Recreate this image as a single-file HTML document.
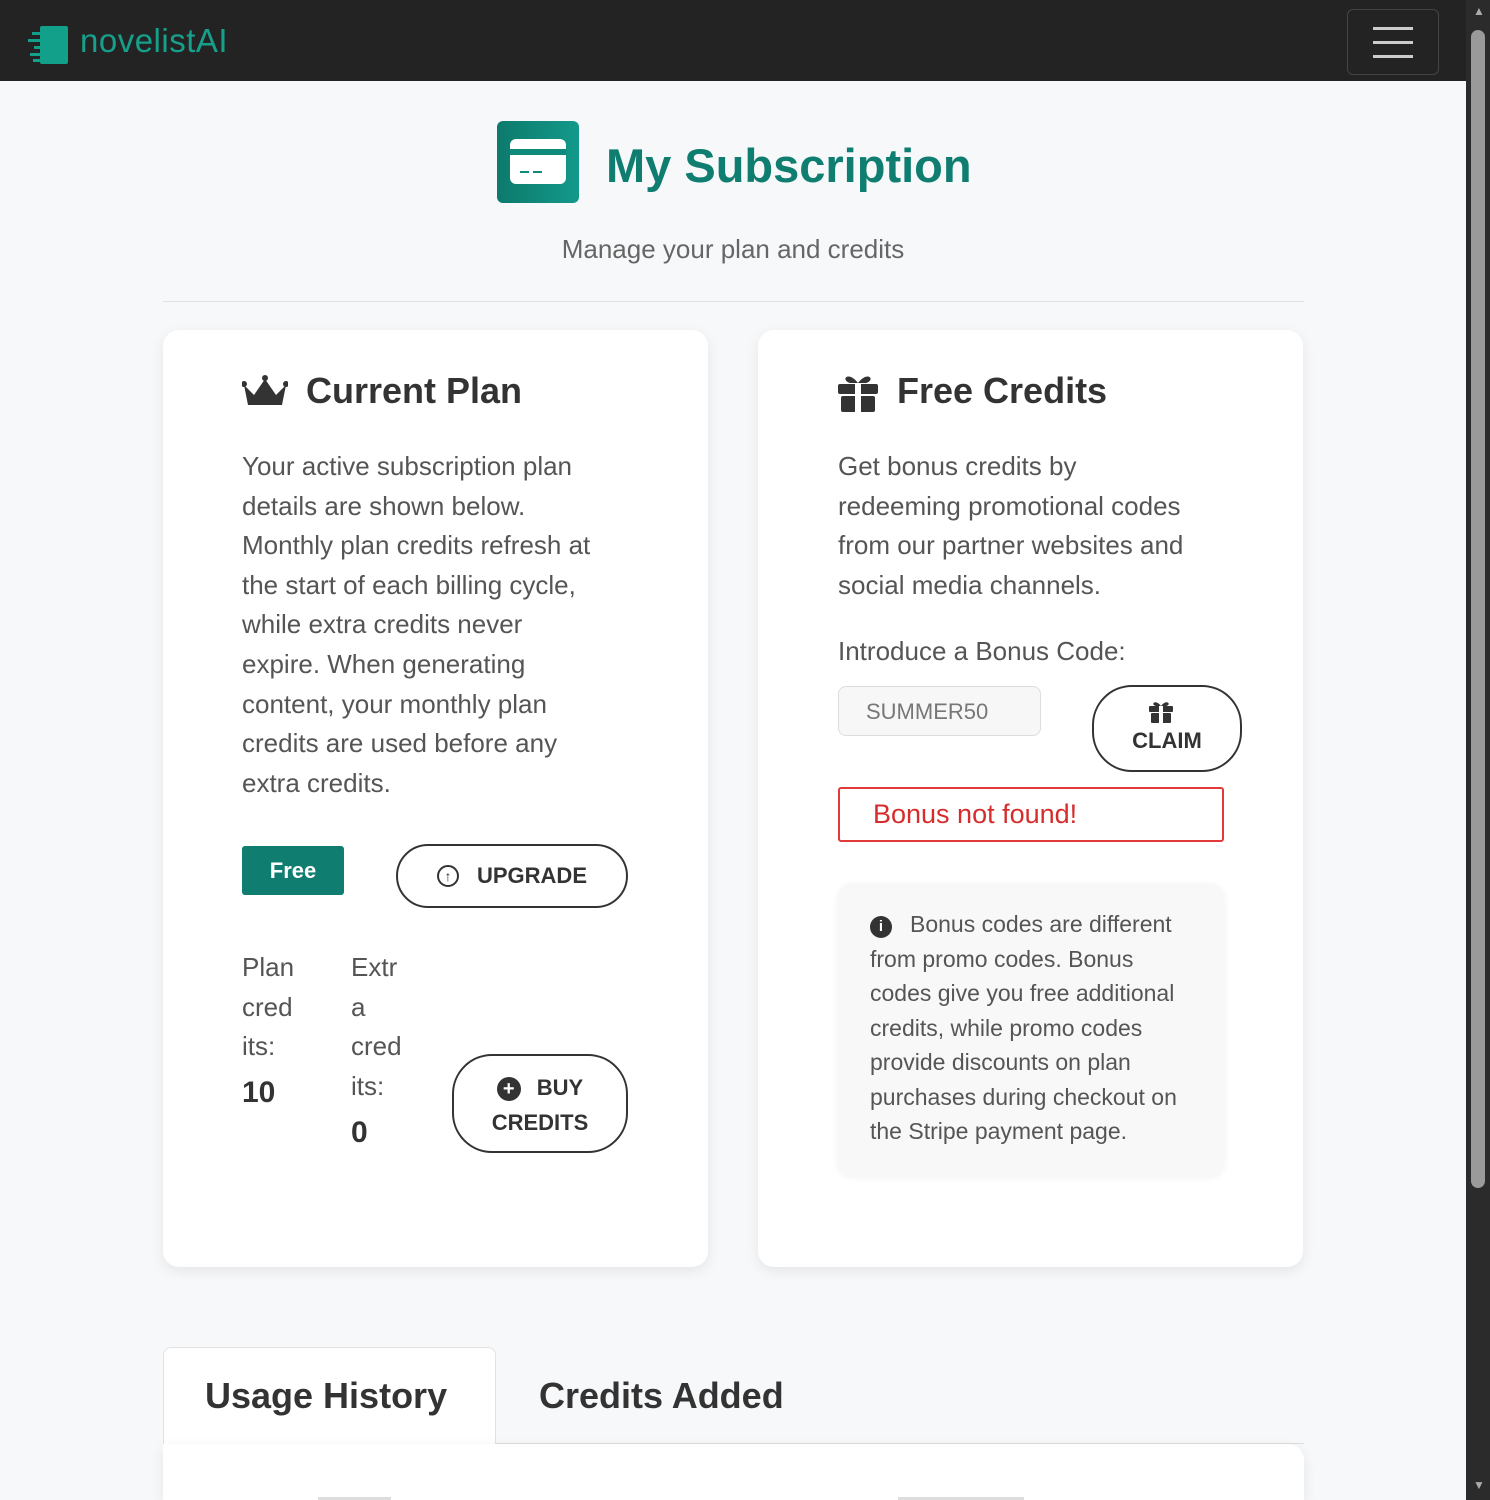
<!DOCTYPE html>
<html style="overflow:hidden;height:1500px"><head><meta charset="utf-8"><style>
*{box-sizing:border-box;margin:0;padding:0}
body{width:1490px;height:1500px;overflow:hidden;background:#f7f8fa;font-family:"Liberation Sans",sans-serif;color:#444;position:relative}
.a{position:absolute;white-space:nowrap}
.nav{left:0;top:0;width:1466px;height:81px;background:#232323}
.sb{left:1466px;top:0;width:24px;height:1500px;background:#2b2b2b}
.thumb{left:1471px;top:30px;width:14px;height:1158px;background:#9a9a9a;border-radius:7px}
.card{background:#fff;border-radius:16px;box-shadow:0 4px 14px rgba(0,0,0,.08)}
.p{font-size:26px;line-height:39.6px;color:#555}
.h{font-weight:bold;font-size:36px;color:#333}
.btn{border:2px solid #333;border-radius:40px;background:#fff;font-weight:bold;color:#333;text-align:center}
</style></head><body>
<div class="a nav"></div>
<svg class="a" style="left:28px;top:26px" width="42" height="38"><rect x="12" y="0" width="28" height="38" rx="2" fill="#13a08b"/><g fill="#13a08b"><rect x="4" y="6" width="10" height="3"/><rect x="0" y="13" width="12" height="3"/><rect x="6" y="20" width="8" height="3"/><rect x="2" y="27" width="10" height="3"/><rect x="5" y="33" width="8" height="3"/></g></svg>
<div class="a" style="left:80px;top:22px;font-size:33px;color:#16a08c;letter-spacing:0.5px">novelistAI</div>
<div class="a" style="left:1347px;top:9px;width:92px;height:66px;border:1px solid #444;border-radius:6px"></div>
<div class="a" style="left:1373px;top:27px;width:40px;height:3px;background:#ccc;box-shadow:0 14px 0 #ccc,0 28px 0 #ccc"></div>
<div class="a sb"></div><div class="a thumb"></div>
<div class="a" style="left:1473px;top:4px;color:#aaa;font-size:12px">▲</div>
<div class="a" style="left:1473px;top:1478px;color:#aaa;font-size:12px">▼</div>

<div class="a" style="left:497px;top:121px;width:82px;height:82px;border-radius:6px;background:linear-gradient(90deg,#0c7a6c,#13998a)"></div>
<div class="a" style="left:510px;top:139px;width:56px;height:45px;border-radius:6px;background:#fff"></div>
<div class="a" style="left:510px;top:149px;width:56px;height:6px;background:#108a7b"></div>
<div class="a" style="left:520px;top:171px;width:9px;height:2px;background:#108a7b;box-shadow:13px 0 0 #108a7b"></div>
<div class="a" style="left:606px;top:138px;font-size:47px;font-weight:bold;color:#0f7e70">My Subscription</div>
<div class="a" style="left:0;width:1466px;top:234px;text-align:center;font-size:26px;color:#666">Manage your plan and credits</div>
<div class="a" style="left:163px;top:301px;width:1141px;height:1px;background:#e2e2e2"></div>

<div class="a card" style="left:163px;top:330px;width:545px;height:937px"></div>
<svg class="a" style="left:242px;top:375px" width="46" height="36"><path d="M2 10 L12 20 L23 4 L34 20 L44 10 L40 30 L6 30Z" fill="#333"/><circle cx="2" cy="9" r="3" fill="#333"/><circle cx="23" cy="3" r="3" fill="#333"/><circle cx="44" cy="9" r="3" fill="#333"/></svg>
<div class="a h" style="left:306px;top:370px">Current Plan</div>
<div class="a p" style="left:242px;top:447px">Your active subscription plan<br>details are shown below.<br>Monthly plan credits refresh at<br>the start of each billing cycle,<br>while extra credits never<br>expire. When generating<br>content, your monthly plan<br>credits are used before any<br>extra credits.</div>
<div class="a" style="left:242px;top:846px;width:102px;height:49px;background:#0f7e70;border-radius:3px;color:#fff;font-weight:bold;font-size:22px;text-align:center;line-height:49px">Free</div>
<div class="a btn" style="left:396px;top:844px;width:232px;height:64px;line-height:60px;font-size:22px"><span style="display:inline-block;width:22px;height:22px;border:2px solid #333;border-radius:50%;font-size:14px;line-height:18px;vertical-align:2px;margin-right:18px">↑</span>UPGRADE</div>
<div class="a p" style="left:242px;top:948px">Plan<br>cred<br>its:</div>
<div class="a" style="left:242px;top:1076px;font-size:30px;font-weight:bold;color:#333">10</div>
<div class="a p" style="left:351px;top:948px">Extr<br>a<br>cred<br>its:</div>
<div class="a" style="left:351px;top:1116px;font-size:30px;font-weight:bold;color:#333">0</div>
<div class="a btn" style="left:452px;top:1054px;width:176px;height:99px;font-size:22px;line-height:35px;padding-top:14px"><span style="display:inline-block;width:24px;height:24px;background:#333;border-radius:50%;color:#fff;font-size:20px;line-height:24px;margin-right:16px">+</span>BUY<br>CREDITS</div>

<div class="a card" style="left:758px;top:330px;width:545px;height:937px"></div>
<svg class="a" style="left:838px;top:372px" width="40" height="40"><rect x="0" y="12" width="40" height="10" rx="2" fill="#333"/><rect x="3" y="24" width="34" height="16" rx="2" fill="#333"/><rect x="17" y="10" width="6" height="30" fill="#fff"/><path d="M20 11 C10 -2 2 8 12 11Z M20 11 C30 -2 38 8 28 11Z" fill="#333"/></svg>
<div class="a h" style="left:897px;top:370px">Free Credits</div>
<div class="a p" style="left:838px;top:447px">Get bonus credits by<br>redeeming promotional codes<br>from our partner websites and<br>social media channels.</div>
<div class="a p" style="left:838px;top:632px">Introduce a Bonus Code:</div>
<div class="a" style="left:838px;top:686px;width:203px;height:50px;border:1px solid #ddd;border-radius:8px;background:#f7f7f7;padding-left:27px;line-height:50px;font-size:22px;color:#777">SUMMER50</div>
<div class="a btn" style="left:1092px;top:685px;width:150px;height:87px;font-size:22px;padding-top:40px;line-height:28px">CLAIM</div>
<svg class="a" style="left:1149px;top:700px" width="24" height="24"><rect x="0" y="6" width="24" height="6" rx="1" fill="#333"/><rect x="2" y="13" width="20" height="10" rx="1" fill="#333"/><rect x="10" y="5" width="4" height="19" fill="#fff"/><path d="M12 6 C6 -2 1 5 7 6Z M12 6 C18 -2 23 5 17 6Z" fill="#333"/></svg>
<div class="a" style="left:838px;top:787px;width:386px;height:55px;border:2px solid #e03a3a;border-radius:3px;color:#d62c2c;font-size:27px;line-height:51px;padding-left:33px">Bonus not found!</div>
<div class="a" style="left:838px;top:883px;width:386px;height:292px;background:#f8f8f8;border-radius:14px;box-shadow:0 2px 8px rgba(0,0,0,.06);padding:24px 0 0 32px;font-size:23px;line-height:34.5px;color:#555"><span style="display:inline-block;width:22px;height:22px;background:#333;border-radius:50%;color:#fff;font-size:15px;line-height:22px;text-align:center;font-weight:bold;margin-right:18px;vertical-align:1px">i</span>Bonus codes are different<br>from promo codes. Bonus<br>codes give you free additional<br>credits, while promo codes<br>provide discounts on plan<br>purchases during checkout on<br>the Stripe payment page.</div>

<div class="a" style="left:163px;top:1443px;width:1141px;height:1px;background:#ddd"></div>
<div class="a" style="left:163px;top:1347px;width:333px;height:97px;background:#fff;border:1px solid #e2e2e2;border-bottom:none;border-radius:8px 8px 0 0"></div>
<div class="a" style="left:205px;top:1375px;font-size:36px;font-weight:bold;color:#333">Usage History</div>
<div class="a" style="left:539px;top:1375px;font-size:36px;font-weight:bold;color:#333">Credits Added</div>
<div class="a card" style="left:163px;top:1444px;width:1141px;height:56px;border-radius:0 16px 0 0"></div>
<div class="a" style="left:318px;top:1497px;width:73px;height:3px;background:#ddd"></div>
<div class="a" style="left:898px;top:1497px;width:126px;height:3px;background:#ddd"></div>
</body></html>
